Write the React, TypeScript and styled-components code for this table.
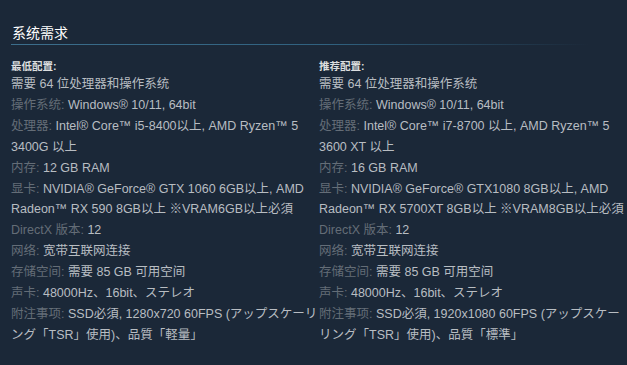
import React from "react";
import styled, { createGlobalStyle } from "styled-components";

const Global = createGlobalStyle`
  html, body {
    margin: 0;
    padding: 0;
    background: #1b2838;
  }
  body {
    font-family: "Liberation Sans", Arial, "Noto Sans CJK SC", "Noto Sans CJK JP", sans-serif;
  }
`;

const Section = styled.section`
  padding: 0 11px;
  height: 365px;
  box-sizing: border-box;
  background: #1b2838;
`;

const Heading = styled.h2`
  margin: 0;
  padding: 24px 0 3px 1px;
  font-size: 14px;
  line-height: 18px;
  font-weight: normal;
  color: #ffffff;
  background-image: linear-gradient(to right, #3c6e8c 0%, #30617f 55%, rgba(40, 80, 105, 0) 100%);
  background-repeat: no-repeat;
  background-position: left bottom;
  background-size: 579px 1px;
`;

const Columns = styled.div`
  display: grid;
  grid-template-columns: 296px 296px;
  column-gap: 12px;
  margin-top: 13px;
`;

const Column = styled.div`
  display: flex;
  flex-direction: column;
`;

const ColumnTitle = styled.div`
  font-size: 10.5px;
  line-height: 16px;
  font-weight: bold;
  color: #dcdedf;
`;

const List = styled.ul`
  list-style: none;
  margin: 0;
  padding: 0;
  font-size: 12.5px;
  line-height: 20.9px;
  color: #b8bdc2;
  white-space: nowrap;
`;

const Item = styled.li`
  margin: 0;
  padding: 0;
`;

const Label = styled.span`
  color: #646d77;
`;

type Row = { label?: string; lines: string[] };

const minimum: Row[] = [
  { lines: ["需要 64 位处理器和操作系统"] },
  { label: "操作系统:", lines: ["Windows® 10/11, 64bit"] },
  { label: "处理器:", lines: ["Intel® Core™ i5-8400以上, AMD Ryzen™ 5", "3400G 以上"] },
  { label: "内存:", lines: ["12 GB RAM"] },
  { label: "显卡:", lines: ["NVIDIA® GeForce® GTX 1060 6GB以上, AMD", "Radeon™ RX 590 8GB以上 ※VRAM6GB以上必須"] },
  { label: "DirectX 版本:", lines: ["12"] },
  { label: "网络:", lines: ["宽带互联网连接"] },
  { label: "存储空间:", lines: ["需要 85 GB 可用空间"] },
  { label: "声卡:", lines: ["48000Hz、16bit、ステレオ"] },
  { label: "附注事项:", lines: ["SSD必須, 1280x720 60FPS (アップスケーリ", "ング「TSR」使用)、品質「軽量」"] },
];

const recommended: Row[] = [
  { lines: ["需要 64 位处理器和操作系统"] },
  { label: "操作系统:", lines: ["Windows® 10/11, 64bit"] },
  { label: "处理器:", lines: ["Intel® Core™ i7-8700 以上, AMD Ryzen™ 5", "3600 XT 以上"] },
  { label: "内存:", lines: ["16 GB RAM"] },
  { label: "显卡:", lines: ["NVIDIA® GeForce® GTX1080 8GB以上, AMD", "Radeon™ RX 5700XT 8GB以上 ※VRAM8GB以上必須"] },
  { label: "DirectX 版本:", lines: ["12"] },
  { label: "网络:", lines: ["宽带互联网连接"] },
  { label: "存储空间:", lines: ["需要 85 GB 可用空间"] },
  { label: "声卡:", lines: ["48000Hz、16bit、ステレオ"] },
  { label: "附注事项:", lines: ["SSD必須, 1920x1080 60FPS (アップスケー", "リング「TSR」使用)、品質「標準」"] },
];

const ReqColumn: React.FC<{ title: string; rows: Row[] }> = ({ title, rows }) => (
  <Column>
    <ColumnTitle>{title}</ColumnTitle>
    <List>
      {rows.map((r, i) => (
        <Item key={i}>
          {r.label && <Label>{r.label}</Label>}
          {r.label && " "}
          {r.lines.map((l, j) => (
            <React.Fragment key={j}>
              {j > 0 && <br />}
              {l}
            </React.Fragment>
          ))}
        </Item>
      ))}
    </List>
  </Column>
);

export default function App() {
  return (
    <>
      <Global />
      <Section>
        <Heading>系统需求</Heading>
        <Columns>
          <ReqColumn title="最低配置:" rows={minimum} />
          <ReqColumn title="推荐配置:" rows={recommended} />
        </Columns>
      </Section>
    </>
  );
}
